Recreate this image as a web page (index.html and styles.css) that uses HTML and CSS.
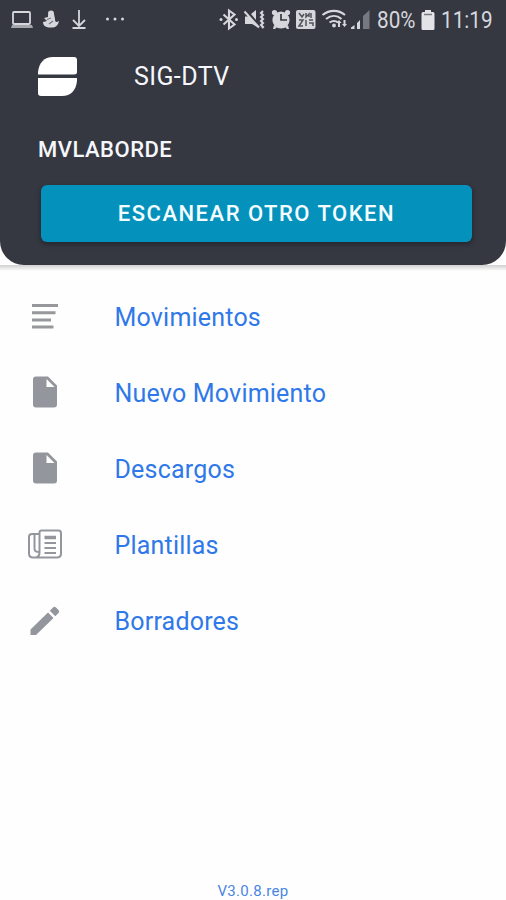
FILE: index.html
```html
<!DOCTYPE html>
<html lang="es">
<head>
<meta charset="utf-8">
<title>SIG-DTV</title>
<link rel="stylesheet" href="styles.css">
</head>
<body>
<div class="app">
  <header class="header">
    <div class="status">
      <svg class="status-left" viewBox="0 0 130 40" width="130" height="40">
        <g fill="none" stroke="#d6d7dc" stroke-width="1.8">
          <rect x="13" y="12" width="17" height="12" rx="1"/>
          <path d="M79 10v16M73 20l6 6 6-6M72.500 28h13"/>
        </g>
        <path d="M12 25h20l1 3H11z" fill="#a5a7ad"/>
        <g fill="#d6d7dc">
          <circle cx="51" cy="13.500" r="3"/>
          <path d="M48 15l6-1 1 5c0 3 1 4 4 2-1 5-4 7-9 6.500-5 0-7-2.500-7-5.500l4-1-3-3 4-1z"/>
          <circle cx="107.500" cy="19" r="1.500"/><circle cx="115" cy="19" r="1.500"/><circle cx="122.500" cy="19" r="1.500"/>
        </g>
        <path d="M47 19.500l4-1.500M49 24l4-3" stroke="#777981" stroke-width="1.200"/>
      </svg>
      <svg class="status-right" viewBox="210 0 165 40" width="165" height="40">
        <g fill="none" stroke="#d6d7dc" stroke-width="2.100">
          <path d="M223.500 14.500l11 10-5.500 4V10.500l5.500 4-11 10"/>
          <path d="M263 11l-2 2 2 2-2 2 2 2-2 2 2 2-2 2 2 2-1 1"/>
          <path d="M244.500 11.500l14.500 16"/>
          <path d="M322.500 15c7-5.500 16-5.500 22.500 0M326 19c5-4 11-4 15.500 0M329.500 22.500c3-2 6-2 8.500 0"/>
        </g>
        <g fill="#d6d7dc">
          <circle cx="221" cy="19.500" r="1.500"/><circle cx="236.500" cy="19.500" r="1.500"/>
          <path d="M245 16.500h4l9 10v1l-6-3.500h-7zM251 14l5-4v10z"/>
          <circle cx="281" cy="20" r="8.600"/>
          <circle cx="274.500" cy="12.500" r="2.600"/><circle cx="287.500" cy="12.500" r="2.600"/>
          <path d="M274 25l3 2-2 2h-2zM288 25l-3 2 2 2h2z"/>
          <rect x="296" y="10" width="19.500" height="19" rx="2"/>
          <circle cx="334" cy="25.500" r="1.900"/>
          <path d="M339 20l2.500 3h-1.500v4h-2v-4h-1.500zM344.500 27l-2.500-3h1.500v-4h2v4h1.500z"/>
          <path d="M351 29v-1.500l3.500-2.500v4zM357 29v-6l3-3v9z"/>
        </g>
        <path d="M363 29V16l6.500-6v19z" fill="#777981"/>
        <path d="M281 14v6h6" fill="none" stroke="#353741" stroke-width="1.700"/>
        <g fill="none" stroke="#51535b" stroke-width="1.500">
          <path d="M299 13l3 4 2-3M306 13v4l3-3v3M311 13v5M299 20h4l-4 6h4M306 20v6M309 20h4M309 23h4v3"/>
        </g>
      </svg>
      <span class="percent">80%</span>
      <svg class="battery" viewBox="0 0 14 20" width="14" height="20">
        <path d="M4 0h6v2h2q1.500 0 1.500 1.500v15q0 1.500-1.500 1.500H2Q.5 20 .5 18.500v-15Q.5 2 2 2h2z" fill="#e3e4e8"/>
        <path d="M3 4.500h8" stroke="#777981" stroke-width="1.500"/>
      </svg>
      <span class="clock">11:19</span>
    </div>
    <div class="brand">
      <svg class="logo" viewBox="0 0 39 39" width="39" height="39" fill="#fff">
        <path d="M0 17.500V15C1 6 6 0 15 0h21q3 0 3 3v12q0 2.500-3 2.500z"/>
        <path d="M0 21h39v3c-1 9-6 15-15 15H3q-3 0-3-3z"/>
      </svg>
      <h1 class="title">SIG-DTV</h1>
    </div>
    <div class="user">MVLABORDE</div>
    <button class="scan">ESCANEAR OTRO TOKEN</button>
  </header>
  <nav class="menu">
    <a class="item">
      <svg class="icon" viewBox="0 0 36 36" width="36" height="36"><path d="M5 6.500h26M5 13.700h23.500M5 21h19M5 28h21.500" stroke="#97989c" stroke-width="3"/></svg>
      <span class="label">Movimientos</span>
    </a>
    <a class="item">
      <svg class="icon" viewBox="0 0 36 36" width="36" height="36"><path fill-rule="evenodd" d="M9 1.500h12l9 9v19q0 3-3 3H9q-3 0-3-3v-25q0-3 3-3zM19.500 4v8h8z" fill="#94969d"/></svg>
      <span class="label">Nuevo Movimiento</span>
    </a>
    <a class="item">
      <svg class="icon" viewBox="0 0 36 36" width="36" height="36"><path fill-rule="evenodd" d="M9 1.500h12l9 9v19q0 3-3 3H9q-3 0-3-3v-25q0-3 3-3zM19.500 4v8h8z" fill="#94969d"/></svg>
      <span class="label">Descargos</span>
    </a>
    <a class="item">
      <svg class="icon" viewBox="0 0 36 36" width="36" height="36"><g fill="none" stroke="#94969d" stroke-width="2"><path d="M12.500 26V5.500q0-2 2-2h17q2.500 0 2.500 2.500v20.500q0 4-4 4H6q-4 0-4-4V10q0-3 3-3h7.500M7.500 8v14q0 3 5 3M12.500 26q0 3-3 4.500"/><path d="M17.500 16h11.500M17.500 21h11.500M17.500 26h11.500"/><path d="M17.500 10.500h11.500" stroke-width="3.500"/></g></svg>
      <span class="label">Plantillas</span>
    </a>
    <a class="item">
      <svg class="icon" viewBox="0 0 36 36" width="36" height="36" fill="#94969d"><path d="M3.500 26.500L21 9.500l5.500 5.500L9 32H3.500zM22.800 7.700l3.200-3.200q1.500-1.500 3 0l2.500 2.500q1.500 1.500 0 3l-3.200 3.200z"/></svg>
      <span class="label">Borradores</span>
    </a>
  </nav>
  <footer class="version">V3.0.8.rep</footer>
</div>
</body>
</html>
```
FILE: styles.css
```css
* { box-sizing: border-box; }
body { margin: 0; background: #fefefe; font-family: Roboto, sans-serif; }
.app { width: 506px; height: 900px; display: flex; flex-direction: column; overflow: hidden; }
.header {
  height: 265px;
  flex: none;
  background: #353741;
  border-radius: 0 0 24px 24px;
  color: #f5f7fc;
}
.status { height: 40px; display: flex; align-items: center; color: #d6d7dc; font-size: 23px; line-height: 40px; }
.status svg { flex: none; }
.status-right { margin-left: 80px; }
.percent, .clock { flex: none; padding-top: 1px; transform-origin: 0 50%; transform: scaleX(.9); white-space: nowrap; }
.percent { width: 44px; margin-left: 2px; }
.battery { margin-bottom: 1px; }
.clock { margin-left: 6px; }
.brand { height: 73px; display: flex; align-items: center; padding-left: 38px; }
.title { margin: 0 0 0 57px; font-size: 25px; font-weight: 400; line-height: 30px; letter-spacing: .4px; }
.user { margin: 23px 0 0 38px; font-size: 22px; font-weight: 500; line-height: 28px; letter-spacing: .5px; }
.scan {
  display: block;
  width: 431px;
  height: 57px;
  margin: 21px 0 0 41px;
  padding: 0;
  border: 0;
  border-radius: 6px;
  background: #0492bd;
  box-shadow: 0 2px 5px rgba(0, 0, 0, .35);
  color: #f5fcff;
  font: 500 22px/57px Roboto, sans-serif;
  letter-spacing: 1.5px;
}
.menu {
  flex: 1;
  position: relative;
  padding-top: 14px;
}
.menu::before {
  content: "";
  position: absolute;
  top: 0;
  left: 0;
  right: 0;
  height: 6px;
  background: linear-gradient(#d0d0d0, #fefefe);
}
.item { height: 76px; display: flex; align-items: center; padding-left: 27px; }
.label { margin-left: 51.5px; padding-top: 2px; color: #2f78e9; font-size: 25px; line-height: 32px; letter-spacing: .2px; }
.version { height: 18px; line-height: 18px; color: #4a86e4; font-size: 15px; letter-spacing: .3px; text-align: center; }
```
